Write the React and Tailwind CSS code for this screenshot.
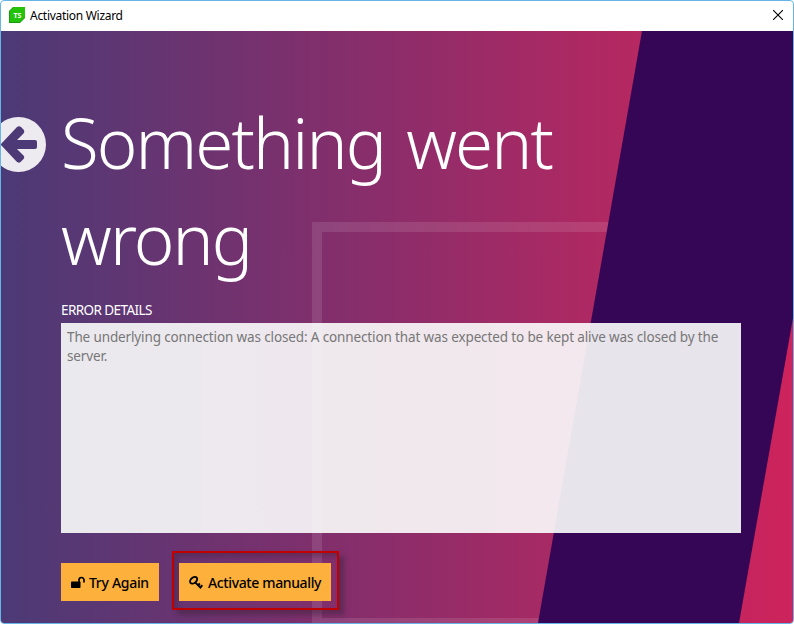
function Backdrop() {
  return (
    <svg className="absolute inset-0 h-full w-full" viewBox="0 0 792 592" preserveAspectRatio="none" aria-hidden="true">
      <defs>
        <linearGradient id="glow" x1="0" x2="1" y1="0" y2="0">
          <stop offset="0" stopColor="#4b3a76" />
          <stop offset="0.5" stopColor="#8d2d6a" />
          <stop offset="0.8" stopColor="#b52861" />
          <stop offset="1" stopColor="#ce235c" />
        </linearGradient>
      </defs>
      <rect width="792" height="592" fill="url(#glow)" />
      <path d="M311 191H700V597H311ZM321 201V587H690V201Z" fill="#fff" fillOpacity=".11" fillRule="evenodd" />
      <path d="M641 0H792V287L738 592H537Z" fill="#350655" />
    </svg>
  );
}

function BackIcon() {
  return (
    <svg className="block h-[56px] w-[46px]" viewBox="0 0 46 56">
      <circle cx="17.500" cy="27.500" r="27.500" fill="#edeaf0" />
      <path d="M-.5 27.500L16 10Q18 8.500 20 10L22.500 12.500Q24 14.500 22.500 16.500L16 23H34Q36 23 36 25V30Q36 32 34 32H16L22.500 38.500Q24 40.500 22.500 42L19.500 45Q17.500 46.500 15.500 44.500Z" fill="#4d3975" />
    </svg>
  );
}

function UnlockIcon() {
  return (
    <svg className="h-[14px] w-[14px] shrink-0" viewBox="0 0 14 14">
      <rect x="0" y="5.500" width="9.500" height="6.500" rx=".8" />
      <path d="M8 6.500V4a2.500 2.500 0 0 1 5 0V6.500" fill="none" stroke="currentColor" strokeWidth="1.700" />
    </svg>
  );
}

function KeyIcon() {
  return (
    <svg className="h-[14px] w-[14px] shrink-0" viewBox="0 0 14 14" fill="none" stroke="currentColor">
      <ellipse cx="4.600" cy="4.300" rx="4" ry="2.700" transform="rotate(-40 4.600 4.300)" strokeWidth="1.900" />
      <path d="M6.200 6.400L12.200 12.300M9 9.200l1.900-1.700M11.200 11.300l2.300-2" strokeWidth="1.900" />
    </svg>
  );
}

const ui = "font-['Noto_Sans','Open_Sans',sans-serif]";

export default function App() {
  return (
    <div className={`flex h-[624px] w-[794px] flex-col overflow-hidden rounded-[4px] border border-[#67b5e8] bg-white ${ui}`}>
      <header className="flex h-[30px] shrink-0 items-center pl-[8px] pr-[10px]">
        <svg className="mb-[2px] h-4 w-4" viewBox="0 0 16 16">
          <path d="M4 0H16V11L11 16H0V4Z" fill="#159b0b" />
          <path d="M5 0H16V10L11 15H1V4Z" fill="#25c20b" />
          <text x="8.500" y="10.700" textAnchor="middle" fill="#fff" className="text-[7px] font-bold">TS</text>
        </svg>
        <h1 className="ml-[5px] whitespace-nowrap text-[12px] leading-4 tracking-[-0.29px] text-black">Activation Wizard</h1>
        <button aria-label="Close" className="mb-[2px] ml-auto">
          <svg className="block h-[10px] w-[10px]" viewBox="0 0 10 10" stroke="#000" strokeWidth="1.100">
            <path d="M0 0L10 10M10 0L0 10" />
          </svg>
        </button>
      </header>
      <main className="relative min-h-0 flex-1">
        <Backdrop />
        <div className="relative flex">
          <button aria-label="Back" className="mt-[86px] h-[56px] w-[46px] shrink-0">
            <BackIcon />
          </button>
          <section className="ml-[14px] flex w-[680px] flex-col">
            <h2 className="mt-[63px] whitespace-nowrap text-[69px] font-light leading-[96px] tracking-[-1.9px] text-white [word-spacing:5px]">
              Something went<br />wrong
            </h2>
            <p className="mt-[14px] text-[13.5px] leading-[20px] tracking-[-0.57px] text-white">ERROR DETAILS</p>
            <div className="mt-[3px] h-[210px] bg-[#fbfdfc]/90 px-[6px] pt-[5px] text-[13.5px] leading-[19px] tracking-[-0.13px] text-[#777]">
              <p className="whitespace-nowrap">
                The underlying connection was closed: A connection that was expected to be kept alive was closed by the<br />server.
              </p>
            </div>
            <div className="mt-[18px] flex">
              <button className="mt-[12px] flex h-[38px] w-[98px] items-center gap-[4px] whitespace-nowrap bg-[#fdb03c] pl-[10px] pt-[1px] text-[14px] font-medium tracking-[-0.3px] text-black">
                <UnlockIcon />
                <span>Try Again</span>
              </button>
              <div className="ml-[13px] h-[59px] w-[167px] border-2 border-[#c00000] pl-[5px] pt-[10px] shadow-[5px_5px_5px_rgba(60,35,60,0.5),inset_4px_4px_5px_rgba(60,35,60,0.4)]">
                <button className="flex h-[38px] w-[152px] items-center gap-[5px] whitespace-nowrap bg-[#fdb03c] pl-[10px] pt-[1px] text-[14px] font-medium tracking-[-0.37px] text-black">
                  <KeyIcon />
                  <span>Activate manually</span>
                </button>
              </div>
            </div>
          </section>
        </div>
      </main>
    </div>
  );
}
